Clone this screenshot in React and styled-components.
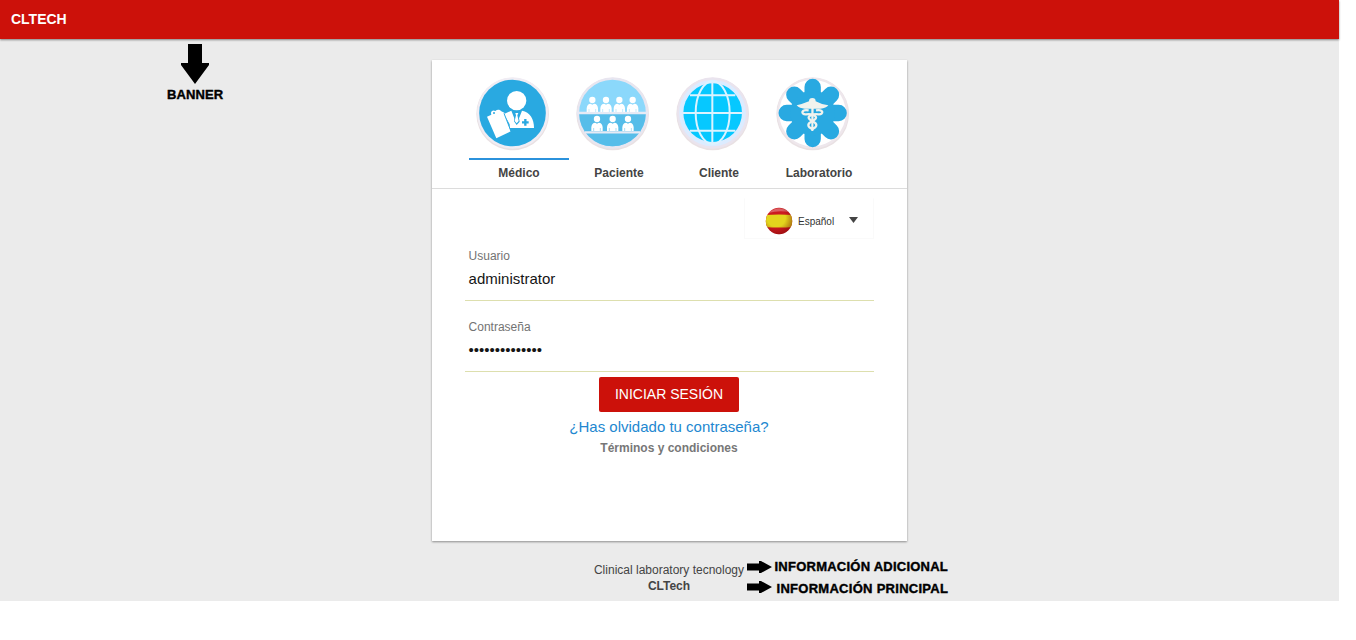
import React from "react";
import styled, { createGlobalStyle } from "styled-components";

const Global = createGlobalStyle`
  * { box-sizing: border-box; }
  body { margin: 0; background: #fff; font-family: "Liberation Sans", Arial, sans-serif; }
`;
const Page = styled.div`
  position: relative;
  width: 1339px;
  height: 601px;
  background: #ebebeb;
  display: flex;
  flex-direction: column;
  align-items: center;
`;
const Banner = styled.header`
  flex: none;
  width: 100%;
  height: 39px;
  padding-left: 11px;
  background: #cc110a;
  box-shadow: 0 1px 2px rgba(0, 0, 0, 0.45);
  color: #fff;
  font-size: 14px;
  font-weight: bold;
  line-height: 38px;
`;
const Card = styled.main`
  flex: none;
  width: 475px;
  height: 481px;
  margin-top: 21px;
  background: #fff;
  box-shadow: 0 1px 2px rgba(0, 0, 0, 0.4);
`;
const Tabs = styled.nav`
  display: flex;
  height: 129px;
  padding: 15px 0 0 37px;
  border-bottom: 1px solid #dcdcdc;
`;
const Tab = styled.div`
  width: 100px;
  svg { display: block; margin: 0 0 7px 5px; }
`;
const TabLabel = styled.div`
  border-top: 2px solid ${(p) => (p.$active ? "#2b92dc" : "transparent")};
  padding-top: 5px;
  text-align: center;
  font-size: 12px;
  font-weight: bold;
  line-height: 16px;
  color: #444;
`;
const Form = styled.form`
  display: flex;
  flex-direction: column;
  align-items: center;
  padding: 9px 33px 0;
`;
const Language = styled.div`
  align-self: flex-end;
  display: flex;
  align-items: center;
  width: 130px;
  height: 41px;
  padding: 5px 0 0 20px;
  border: 1px solid #fafafa;
  border-top-color: transparent;
  font-size: 10px;
  color: #333;
  span { margin: 1px 14px 0 5px; width: 37px; }
  svg { flex: none; }
`;
const Field = styled.label`
  width: 100%;
  height: 62px;
  margin-bottom: 9px;
  padding: 9px 0 0 3.6px;
  border-bottom: 1px solid #dddfae;
`;
const FieldName = styled.div`
  font-size: 12px;
  line-height: 16px;
  color: #737373;
`;
const FieldValue = styled.div`
  margin-top: 6px;
  font-size: 15px;
  line-height: 18px;
  color: #151515;
`;
const Submit = styled.button`
  width: 140px;
  height: 35px;
  margin: -4px 1px 0 0;
  padding: 0 0 2px;
  border: 0;
  border-radius: 2px;
  background: #cc110a;
  color: #fff;
  font: 14px "Liberation Sans", Arial, sans-serif;
`;
const Forgot = styled.a`
  margin: 6px 1px 0 0;
  font-size: 15px;
  line-height: 18px;
  color: #2287d0;
`;
const Terms = styled.a`
  margin: 4px 1px 0 0;
  font-size: 12px;
  font-weight: bold;
  line-height: 16px;
  color: #777;
`;
const Footer = styled.footer`
  margin: 21px 1px 0 0;
  text-align: center;
  font-size: 12px;
  line-height: 16px;
  color: #444;
  strong { display: block; }
`;
const Note = styled.div`
  position: absolute;
  left: ${(p) => p.$x}px;
  top: ${(p) => p.$y}px;
  display: flex;
  flex-direction: ${(p) => (p.$down ? "column" : "row")};
  align-items: center;
  gap: ${(p) => p.$gap}px;
  font-size: 13px;
  font-weight: bold;
  line-height: 16px;
  letter-spacing: ${(p) => p.$track || 0}px;
  color: #000;
  white-space: nowrap;
  -webkit-text-stroke: 0.4px #000;
  svg { flex: none; margin-bottom: ${(p) => p.$lift || 0}px; }
`;

const Round = ({ fill, rim = "#e8e6f0", children }) => (
  <svg width="76" height="76" viewBox="27 30 228 228">
    <circle cx="143" cy="147" r="109" fill="#e9e1e3" />
    <circle cx="143" cy="144" r="107" fill={rim} />
    <circle cx="142.500" cy="144" r="100" fill={fill} />
    {children}
  </svg>
);

const Doctor = () => (
  <Round fill="#29a9e1" rim="#f0edf4">
    <g fill="#fff">
      <circle cx="155" cy="107" r="29" />
      <path d="M117 147L139 137L155 178L171 137C195 142 207 161 207 189H134V178Z" />
      <path d="M66 155L79 149C75 139 84 133 91 138C98 132 106 135 109 139L118 143L137 199L94 220Z" />
    </g>
    <path d="M143 136L155 144L166 136L160 148L164 170L155 180L147 169L151 148Z" fill="#29a9e1" />
    <path d="M151 144H160L157 151L161 168L155 175L149 168L153 151Z" fill="#fff" />
    <path d="M181 162V182M171 172H191" stroke="#29a9e1" strokeWidth="7" />
    <path d="M117 145L138 199" stroke="#29a9e1" strokeWidth="3" />
    <circle cx="87" cy="144" r="3" fill="#29a9e1" />
  </Round>
);

const Person = ({ x, y, low }) => (
  <g transform={`translate(${x} ${y})`}>
    <circle r="9.500" fill="#fff" />
    <path d="M-17 36V25Q-16 11-5 11L0 14L5 11Q16 11 17 25V36Z" fill="#fff" />
    <path d="M-10 27V36M10 27V36" stroke={low ? "#56bde9" : "#8bd8fb"} strokeWidth="1.500" />
  </g>
);

const Patients = () => (
  <Round fill="#8bd8fb">
    <path d="M42.500 144H242.500A100 100 0 0 1 42.500 144Z" fill="#56bde9" />
    <path d="M35 144H250M60 202H225" stroke="#e6eaf5" strokeWidth="7" />
    {[82, 123, 163, 203].map((x) => <Person key={x} x={x} y={105} />)}
    {[96, 143, 189].map((x) => <Person key={x} x={x} y={162} low />)}
  </Round>
);

const Globe = () => (
  <Round fill="#dcecff" rim="#eae4ee">
    <circle cx="143" cy="143" r="88" fill="#06c8ff" />
    <g fill="none" stroke="#dcf3ff" strokeWidth="6">
      <path d="M142 54V232M54 144H231M75 91H211M75 197H211" />
      <ellipse cx="143" cy="143" rx="51" ry="94" />
    </g>
  </Round>
);

const Laboratory = () => (
  <Round fill="#fff" rim="#eee7ec">
    <path d="M143 66V222M65 144H221M88 89L198 199M88 199L198 89" stroke="#29a9e1" strokeWidth="49" strokeLinecap="round" />
    <circle cx="143" cy="144" r="67" fill="#29a9e1" />
    <g fill="#f1f3ee">
      <path d="M95 121Q113 117 132 109A10 10 0 1 1 152 109Q170 119 190 121Q184 130 166 131H119Q104 131 95 121Z" />
      <path d="M139 125H146L145 198H139Z" />
    </g>
    <g fill="none" stroke="#f1f3ee" strokeWidth="7">
      <path d="M131 136C108 132 107 149 123 148C139 145 158 153 152 161C146 169 130 171 130 180Q130 189 146 192" />
      <path d="M153 136C176 132 177 149 161 148C145 145 126 153 132 161C138 169 154 171 154 180Q154 189 138 192" />
    </g>
  </Round>
);

const Flag = () => (
  <svg width="28" height="28" viewBox="0 0 28 28">
    <defs>
      <clipPath id="flag"><circle cx="14" cy="14" r="13.200" /></clipPath>
      <radialGradient id="gloss" cx=".4" cy=".38" r=".65">
        <stop offset=".5" stopColor="#700" stopOpacity="0" />
        <stop offset="1" stopColor="#600" stopOpacity=".5" />
      </radialGradient>
    </defs>
    <g clipPath="url(#flag)">
      <rect width="28" height="28" fill="#cc1b20" />
      <path d="M0 8Q14 7 28 8V20Q14 21 0 20Z" fill="#e3d51d" />
      <path d="M3 6Q14-3 24 5Q14 3 3 6Z" fill="#fff" opacity=".3" />
      <rect width="28" height="28" fill="url(#gloss)" />
    </g>
  </svg>
);

const RightArrow = () => (
  <svg width="25" height="12" viewBox="0 0 25 12">
    <path d="M0 2.500H12V0H14L25 6L14 12H12V9.500H0Z" />
  </svg>
);

const tabs = [
  ["Médico", Doctor],
  ["Paciente", Patients],
  ["Cliente", Globe],
  ["Laboratorio", Laboratory],
];

export default function App() {
  return (
    <Page>
      <Global />
      <Banner>CLTECH</Banner>
      <Card>
        <Tabs>
          {tabs.map(([name, Icon], i) => (
            <Tab key={name}>
              <Icon />
              <TabLabel $active={i === 0}>{name}</TabLabel>
            </Tab>
          ))}
        </Tabs>
        <Form>
          <Language>
            <Flag />
            <span>Español</span>
            <svg width="9" height="6" viewBox="0 0 9 6" style={{ marginBottom: 2 }}>
              <path d="M0 0H9L4.500 6Z" fill="#444" />
            </svg>
          </Language>
          <Field>
            <FieldName>Usuario</FieldName>
            <FieldValue>administrator</FieldValue>
          </Field>
          <Field>
            <FieldName>Contraseña</FieldName>
            <FieldValue>••••••••••••••</FieldValue>
          </Field>
          <Submit type="button">INICIAR SESIÓN</Submit>
          <Forgot>¿Has olvidado tu contraseña?</Forgot>
          <Terms>Términos y condiciones</Terms>
        </Form>
      </Card>
      <Footer>
        Clinical laboratory tecnology
        <strong>CLTech</strong>
      </Footer>
      <Note $x={167} $y={44} $gap={3} $track={0.1} $down>
        <svg width="28" height="40" viewBox="0 0 28 40">
          <path d="M7 0H21V19H28V21L14 40L0 21V19H7Z" />
        </svg>
        BANNER
      </Note>
      <Note $x={747} $y={559} $gap={2.5} $track={0.24}>
        <RightArrow />
        INFORMACIÓN ADICIONAL
      </Note>
      <Note $x={747} $y={581} $gap={4.5} $track={0.28} $lift={4}>
        <RightArrow />
        INFORMACIÓN PRINCIPAL
      </Note>
    </Page>
  );
}
